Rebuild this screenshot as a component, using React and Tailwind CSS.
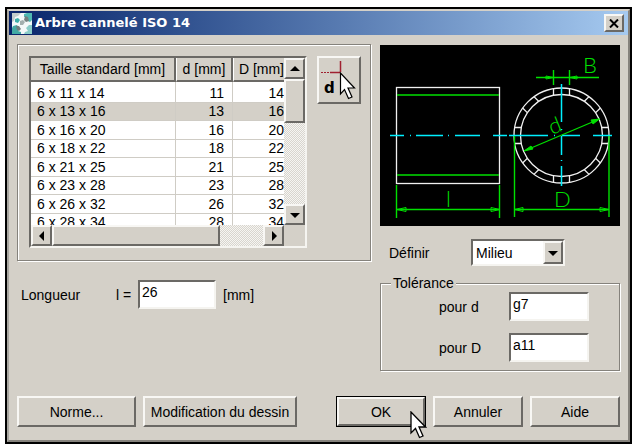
import { useState } from 'react';
import clsx from 'clsx';

const SIZES = [
  [11, 14],
  [13, 16],
  [16, 20],
  [18, 22],
  [21, 25],
  [23, 28],
  [26, 32],
  [28, 34],
];

const RAISED = 'bg-[#d4d0c8] border-2 border-t-[#f8f7f4] border-l-[#f8f7f4] border-b-[#6b6965] border-r-[#6b6965]';
const SUNKEN = 'bg-white border-2 border-t-[#6b6965] border-l-[#6b6965] border-b-[#f5f4f0] border-r-[#f5f4f0]';
const TRACK = 'bg-[repeating-conic-gradient(#d8d5ce_0_25%,#f6f5f2_0_50%)] bg-[length:2px_2px]';

const POINTS = {
  up: '0,6 5,1 10,6',
  down: '0,2 10,2 5,7',
  left: '7,-1 7,9 2,4',
  right: '3,-1 3,9 8,4',
};

const Arrow = ({ dir }) => (
  <svg width="10" height="8" viewBox="0 0 10 8" className="overflow-visible" aria-hidden="true">
    <polygon points={POINTS[dir]} fill="#000" />
  </svg>
);

const ScrollButton = ({ dir, label }) => (
  <button type="button" aria-label={label} className={clsx('flex size-[21px] shrink-0 items-center justify-center', RAISED)}>
    <Arrow dir={dir} />
  </button>
);

const PushButton = ({ className, children }) => (
  <button type="button" className={clsx('h-[31px] whitespace-nowrap', RAISED, className)}>
    {children}
  </button>
);

const Pointer = ({ className }) => (
  <svg width="17" height="28" viewBox="0 0 17 28" className={className} aria-hidden="true">
    <path d="M1 1V22L5.5 17.5L9.5 26.5L13 25L9 16H15.5Z" fill="#fff" stroke="#000" strokeWidth="1.3" />
  </svg>
);

const AppIcon = () => (
  <svg width="20" height="21" viewBox="0 0 20 21" aria-hidden="true">
    <rect width="20" height="21" fill="#f4f8f8" />
    <path d="M0 0H9L6 3L3 4L2 8L0 9Z" fill="#c3cccb" />
    <path d="M12 1L15 0H20V7L18 9L16 8L15 4L12 4Z" fill="#4fb8b2" />
    <path d="M13 3L16 4L17 8L14 9L12 7Z" fill="#74807f" />
    <path d="M3 6L6 5L8 7L6 10L3 9Z" fill="#3fb0aa" />
    <path d="M8 8L11 7L13 9L11 12L8 12Z" fill="#a3afae" />
    <path d="M1 13L5 12L7 15L6 18L9 19V21H0V15Z" fill="#43aaa4" />
    <path d="M4 13L7 13L9 16L7 18L5 17Z" fill="#6f7e7d" />
    <path d="M14 15L17 12L20 12V21H12L13 19L16 18Z" fill="#8accc8" />
  </svg>
);

const ShaftDrawing = () => (
  <svg viewBox="0 0 240 181" className="block w-full bg-black" role="img" aria-label="Arbre cannelé">
    <g fill="none" stroke="#f0f0f0" strokeWidth="1.3">
      <rect x="16.5" y="42.5" width="103" height="96" />
      <circle cx="181.5" cy="90.5" r="47.5" />
      <circle cx="181.5" cy="90.5" r="41" />
      {[0, 45, 90, 135, 180, 225, 270, 315].map((a) => (
        <path key={a} d="M173.5 43.5V50.5M189.5 43.5V50.5" transform={`rotate(${a} 181.5 90.5)`} />
      ))}
    </g>
    <g fill="none" stroke="#00f0ff" strokeWidth="1.5">
      <path d="M10 90.5H24M30 90.5H31M36 90.5H63M68 90.5H69M75 90.5H100M113 90.5H127M129 90.5H168M174 90.5H175M182 90.5H200M213 90.5H232" />
      <path d="M181.5 39V77M181.5 84V85M181.5 91V110M181.5 115V116M181.5 121V141" />
    </g>
    <g fill="none" stroke="#00e000" strokeWidth="1.4">
      <path d="M17 50H119M17 130H119" />
      <path d="M16.5 140V173M119.5 140V173M17 164.5H120" />
      <path d="M134.5 91V172M229 91V172M134.5 164.5H229" />
      <path d="M156 32.5H219M173.5 25V40M189.5 25V40" />
    </g>
    <g fill="none" stroke="#00e000">
      <path d="M17 164.5L26 162.5V166.5ZM120 164.5L111 162.5V166.5Z" />
      <path d="M134.5 164.5L143 162.5V166.5ZM229 164.5L220 162.5V166.5Z" />
      <path d="M173.5 32.5L166 31V34ZM189.5 32.5L197 31V34Z" />
      <path d="M144 106L219.5 74" strokeWidth="1.3" />
      <path d="M144 106L151 101L153 104ZM219.5 74L211 75L213 79Z" fill="#00e000" />
    </g>
    <g fill="#00e000" className="font-['Lato'] text-[22px] font-light">
      <text x="203" y="28">B</text>
      <text x="174" y="162">D</text>
      <text x="66" y="162">l</text>
      <text x="172" y="90" transform="rotate(-22 172 90)">d</text>
    </g>
  </svg>
);

const SizeList = () => {
  const [selected, setSelected] = useState(1);

  return (
    <div className="w-[278px] border-2 border-t-[#6b6965] border-l-[#6b6965] border-b-[#f5f4f0] border-r-[#f5f4f0] bg-[#d4d0c8]">
      <div className="flex h-[167px]">
        <div className="flex-1 overflow-hidden bg-white">
          <table className="w-full table-fixed border-separate border-spacing-0">
            <thead>
              <tr className="h-6 bg-[#d4d0c8]">
                <th className="w-[145px] border-r-2 border-b-2 border-[#6b6965] p-0 text-center font-normal">Taille standard [mm]</th>
                <th className="w-[57px] border-r-2 border-b-2 border-[#6b6965] border-l border-l-white p-0 text-center font-normal">d [mm]</th>
                <th className="border-b-2 border-[#6b6965] border-l border-l-white p-0 text-right font-normal">D [mm]</th>
              </tr>
            </thead>
            <tbody>
              {SIZES.map(([d, D], i) => (
                <tr
                  key={d}
                  onClick={() => setSelected(i)}
                  className={clsx('h-[19px] align-bottom leading-[17px] first:h-[21px] even:h-[18px]', i === selected && 'bg-[#d4d0c8]')}
                >
                  <td className="border-r border-b border-[#cfccc5] p-0 pl-1.5">{`6 x ${d} x ${D}`}</td>
                  <td className="border-r border-b border-[#cfccc5] p-0 pr-2 text-right">{d}</td>
                  <td className="border-b border-[#cfccc5] p-0 text-right">{D}</td>
                </tr>
              ))}
            </tbody>
          </table>
        </div>
        <div className={clsx('flex w-[21px] flex-col', TRACK)}>
          <ScrollButton dir="up" label="Haut" />
          <div className={clsx('h-11', RAISED)} />
          <div className="flex-1" />
          <ScrollButton dir="down" label="Bas" />
        </div>
      </div>
      <div className="flex pr-[21px]">
        <div className={clsx('flex flex-1', TRACK)}>
          <ScrollButton dir="left" label="Gauche" />
          <div className={clsx('w-[168px]', RAISED)} />
          <div className="flex-1" />
          <ScrollButton dir="right" label="Droite" />
        </div>
      </div>
    </div>
  );
};

const Tolerance = ({ id, label, value }) => (
  <div className="flex items-center">
    <label htmlFor={id} className="w-[70px]">{label}</label>
    <input id={id} defaultValue={value} className={clsx('h-[29px] w-20 px-0.5 pb-1.5 outline-none', SUNKEN)} />
  </div>
);

const App = () => {
  return (
    <div className="min-h-screen bg-white pt-[7px] pl-[5px] font-['Liberation_Sans',sans-serif] text-[14px] leading-[18px] text-black">
      <div className="border-2 border-black bg-[#d4d0c8]">
        <div className="border-2 border-t-[#d4d0c8] border-l-[#a8a6a0] border-b-[#85827c] border-r-[#85827c]">
          {/* Title bar */}
          <div className="flex h-6 items-center bg-linear-to-r from-[#0a246a] to-[#a6caf0] pr-1 pl-[3px]">
            <AppIcon />
            <h1 className="ml-[3px] flex-1 font-['DejaVu_Sans',sans-serif] text-[13px] font-bold text-white">
              Arbre cannelé ISO 14
            </h1>
            <button type="button" aria-label="Fermer" className={clsx('flex h-[18px] w-5 items-center justify-center', RAISED)}>
              <svg width="10" height="9" viewBox="0 0 10 9" aria-hidden="true">
                <path d="M1 0.5L9 8.5M9 0.5L1 8.5" stroke="#000" strokeWidth="2" />
              </svg>
            </button>
          </div>

          <div className="px-2 pt-[9px] pb-[13px]">
            <div className="flex justify-between">
              <div>
                {/* Standard sizes */}
                <div className="flex items-start gap-2.5 border border-[#85827c] p-[11px] pr-[9px] pb-3 shadow-[1px_1px_0_#fff,inset_1px_1px_0_#fff]">
                  <SizeList />
                  <button type="button" aria-label="Choisir d" className={clsx('h-12 w-11', RAISED)}>
                    <svg width="40" height="44" viewBox="0 0 40 44" aria-hidden="true">
                      <path d="M2 14.5H11" stroke="#a02030" strokeDasharray="2 1" />
                      <path d="M11 14.5H21M21.5 3V14" stroke="#a02030" strokeWidth="1.5" />
                      <text x="5" y="35" className="font-['DejaVu_Sans'] text-[15px] font-bold">d</text>
                      <path d="M21.5 15V36L25.5 31.5L29.5 40.5L33 39L29 30H35.5Z" fill="#fff" stroke="#000" strokeWidth="1.2" />
                    </svg>
                  </button>
                </div>

                <div className="mt-[19px] flex items-center pl-1">
                  <span className="w-[95px]">Longueur</span>
                  <label htmlFor="length" className="w-[22px]">l =</label>
                  <input id="length" defaultValue="26" className={clsx('h-[29px] w-[78px] px-0.5 pb-1.5 outline-none', SUNKEN)} />
                  <span className="ml-[7px]">[mm]</span>
                </div>
              </div>

              <div className="w-60 pt-px">
                <ShaftDrawing />

                <div className="mt-[13px] flex items-center pl-[9px]">
                  <label htmlFor="define" className="w-[82px]">Définir</label>
                  <div className={clsx('flex h-[27px] w-[94px]', SUNKEN)}>
                    <select id="define" className="w-[70px] flex-1 appearance-none pl-[3px] outline-none">
                      <option>Milieu</option>
                    </select>
                    <span className={clsx('flex w-5 items-center justify-center', RAISED)}>
                      <Arrow dir="down" />
                    </span>
                  </div>
                </div>

                {/* Tolerances */}
                <fieldset className="mt-2 flex flex-col gap-3 border border-[#85827c] pb-2 pl-[58px] shadow-[1px_1px_0_#fff,inset_1px_1px_0_#fff]">
                  <legend className="-ml-12 bg-[#d4d0c8] px-0.5">Tolérance</legend>
                  <Tolerance id="tol-d" label="pour d" value="g7" />
                  <Tolerance id="tol-D" label="pour D" value="a11" />
                </fieldset>
              </div>
            </div>

            <div className="mt-[25px] flex gap-[7px]">
              <PushButton className="w-[119px]">Norme...</PushButton>
              <PushButton className="w-[154px]">Modification du dessin</PushButton>
              <div className="relative ml-auto border border-black">
                <button type="button" className={clsx('h-[29px] w-[88px] whitespace-nowrap', RAISED)}>OK</button>
                <Pointer className="absolute top-3.5 left-[73px]" />
              </div>
              <PushButton className="w-[90px]">Annuler</PushButton>
              <PushButton className="w-[90px]">Aide</PushButton>
            </div>
          </div>
        </div>
      </div>
    </div>
  );
};

export default App;
